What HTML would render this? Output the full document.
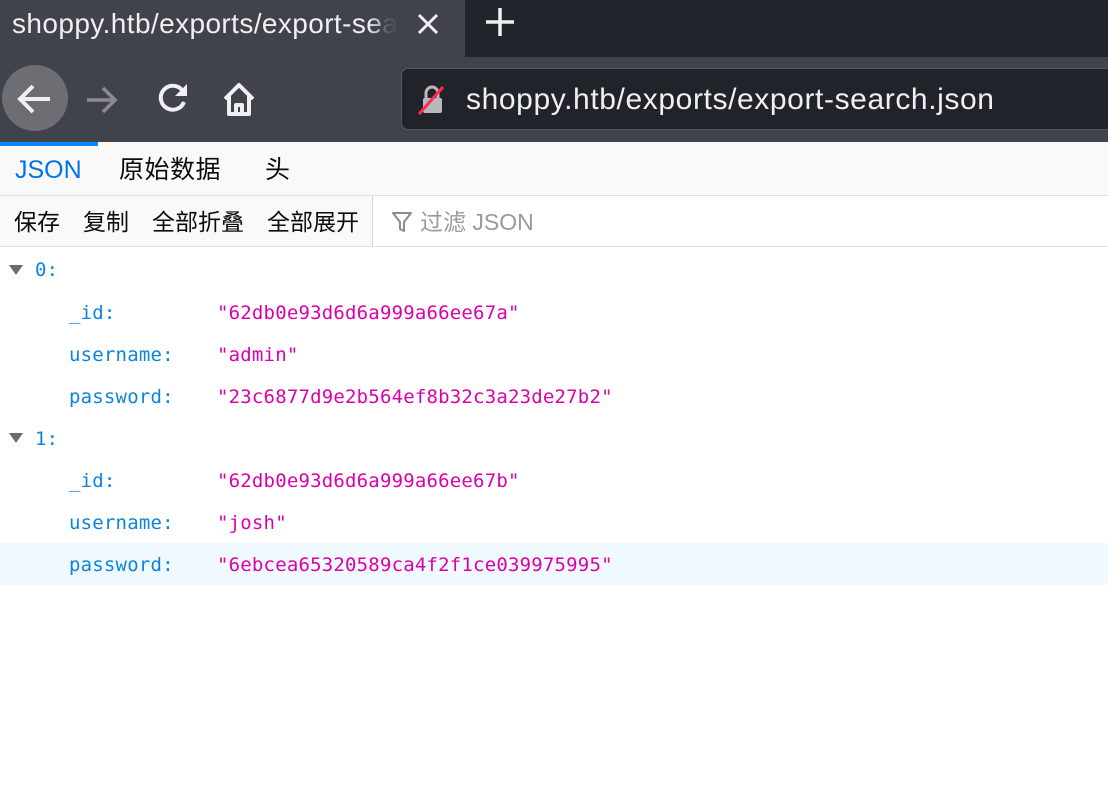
<!DOCTYPE html>
<html><head><meta charset="utf-8"><style>
*{margin:0;padding:0;box-sizing:border-box}
body{width:1108px;height:798px;background:#fff;position:relative;overflow:hidden;font-family:"Liberation Sans","Noto Sans CJK SC",sans-serif}
.abs{position:absolute}
.mono{font-family:"DejaVu Sans Mono","Liberation Mono",monospace;font-size:19px;letter-spacing:0.2px}
.k{color:#0b84dd}.v{color:#dd00a9}
</style></head><body>
<div class="abs" style="left:0;top:0;width:1108px;height:57px;background:#22242b"></div>
<div class="abs" style="left:0;top:0;width:465px;height:57px;background:#40434b"></div>
<div class="abs" style="left:12px;top:4px;width:395px;height:40px;overflow:hidden;white-space:nowrap;color:#f0f0f2;font-size:28px;letter-spacing:0.4px;line-height:40px">shoppy.htb/exports/export-se<span style="opacity:.4">arch</span></div>
<div class="abs" style="left:368px;top:4px;width:40px;height:40px;background:linear-gradient(90deg,rgba(64,67,75,0),#40434b 80%)"></div>
<svg class="abs" style="left:416px;top:12px" width="24" height="24" viewBox="0 0 24 24"><path d="M3 3L21 21M21 3L3 21" stroke="#f0f0f2" stroke-width="3"/></svg>
<svg class="abs" style="left:484px;top:6px" width="32" height="32" viewBox="0 0 32 32"><path d="M16 2V30M2 16H30" stroke="#f0f0f2" stroke-width="3.5"/></svg>
<div class="abs" style="left:0;top:57px;width:1108px;height:85px;background:#40434b"></div>
<div class="abs" style="left:2px;top:65px;width:66px;height:66px;border-radius:50%;background:#6c6e74"></div>
<svg class="abs" style="left:16px;top:80px" width="38" height="38" viewBox="0 0 38 38"><path d="M34 19H5M17 6L4 19L17 32" stroke="#f0f0f2" stroke-width="4" fill="none"/></svg>
<svg class="abs" style="left:84px;top:82px" width="36" height="36" viewBox="0 0 36 36"><path d="M3 18H31M19 6L31 18L19 30" stroke="#8a8c91" stroke-width="3.5" fill="none"/></svg>
<svg class="abs" style="left:154px;top:80px" width="38" height="38" viewBox="0 0 38 38"><path d="M30 22A12 12 0 1 1 28 10" stroke="#f0f0f2" stroke-width="4" fill="none"/><path d="M33 4V16H21Z" fill="#f0f0f2"/></svg>
<svg class="abs" style="left:220px;top:80px" width="38" height="38" viewBox="0 0 38 38"><path d="M5 19L19 5L33 19M9 16V34H29V16M16 34V25H22V34" stroke="#f0f0f2" stroke-width="4" fill="none" stroke-linejoin="round"/></svg>
<div class="abs" style="left:401px;top:68px;width:720px;height:62px;background:#202329;border:1px solid #55585f;border-radius:7px"></div>
<svg class="abs" style="left:416px;top:84px" width="32" height="32" viewBox="0 0 32 32"><path d="M10 14V9A6 6 0 0 1 22 9V14" stroke="#b9b9bc" stroke-width="3" fill="none"/><rect x="7" y="14" width="19" height="15" rx="2" fill="#b9b9bc"/><path d="M3 30L27 3" stroke="#ff2a50" stroke-width="3"/></svg>
<div class="abs" style="left:466px;top:79px;color:#f0f0f2;font-size:30px;letter-spacing:0.6px;line-height:42px;white-space:nowrap">shoppy.htb/exports/export-search.json</div>
<div class="abs" style="left:0;top:142px;width:1108px;height:54px;background:#f9f9fa;border-bottom:1px solid #e0e0e2"></div>
<div class="abs" style="left:0;top:142px;width:98px;height:4px;background:#0a84ff"></div>
<div class="abs" style="left:15px;top:153px;font-size:25px;line-height:34px;color:#0074e8">JSON</div>
<div class="abs" style="left:119px;top:153px;font-size:25px;line-height:34px;color:#0c0c0d;letter-spacing:0.5px">原始数据</div>
<div class="abs" style="left:265px;top:153px;font-size:25px;line-height:34px;color:#0c0c0d">头</div>
<div class="abs" style="left:0;top:196px;width:1108px;height:51px;background:#f9f9fa;border-bottom:1px solid #e0e0e2"></div>
<div class="abs" style="left:372px;top:196px;width:736px;height:51px;background:#fff;border-left:1px solid #d7d7db;border-bottom:1px solid #e0e0e2"></div>
<div class="abs" style="left:14px;top:205px;font-size:23px;line-height:34px;color:#0c0c0d;white-space:nowrap"><span>保存</span><span style="margin-left:23px">复制</span><span style="margin-left:23px">全部折叠</span><span style="margin-left:23px">全部展开</span></div>
<svg class="abs" style="left:391px;top:210px" width="22" height="24" viewBox="0 0 22 24"><path d="M2 3H20L13 12V21L9 19V12Z" stroke="#8a8a8f" stroke-width="2" fill="none" stroke-linejoin="round"/></svg>
<div class="abs" style="left:420px;top:205px;font-size:23px;line-height:34px;color:#9a9a9e">过滤 JSON</div>
<div class="abs" style="left:0;top:543px;width:1108px;height:42px;background:#f0f9fe"></div>
<svg class="abs" style="left:8px;top:264px" width="16" height="12"><path d="M1 1H15L8 11Z" fill="#6b6b70"/></svg>
<svg class="abs" style="left:8px;top:432px" width="16" height="12"><path d="M1 1H15L8 11Z" fill="#6b6b70"/></svg>
<div class="mono">
<div class="abs k" style="left:35px;top:259px">0:</div>
<div class="abs k" style="left:69px;top:302px">_id:</div><div class="abs v" style="left:217px;top:302px">"62db0e93d6d6a999a66ee67a"</div>
<div class="abs k" style="left:69px;top:344px">username:</div><div class="abs v" style="left:217px;top:344px">"admin"</div>
<div class="abs k" style="left:69px;top:386px">password:</div><div class="abs v" style="left:217px;top:386px">"23c6877d9e2b564ef8b32c3a23de27b2"</div>
<div class="abs k" style="left:35px;top:428px">1:</div>
<div class="abs k" style="left:69px;top:470px">_id:</div><div class="abs v" style="left:217px;top:470px">"62db0e93d6d6a999a66ee67b"</div>
<div class="abs k" style="left:69px;top:512px">username:</div><div class="abs v" style="left:217px;top:512px">"josh"</div>
<div class="abs k" style="left:69px;top:554px">password:</div><div class="abs v" style="left:217px;top:554px">"6ebcea65320589ca4f2f1ce039975995"</div>
</div>
</body></html>
